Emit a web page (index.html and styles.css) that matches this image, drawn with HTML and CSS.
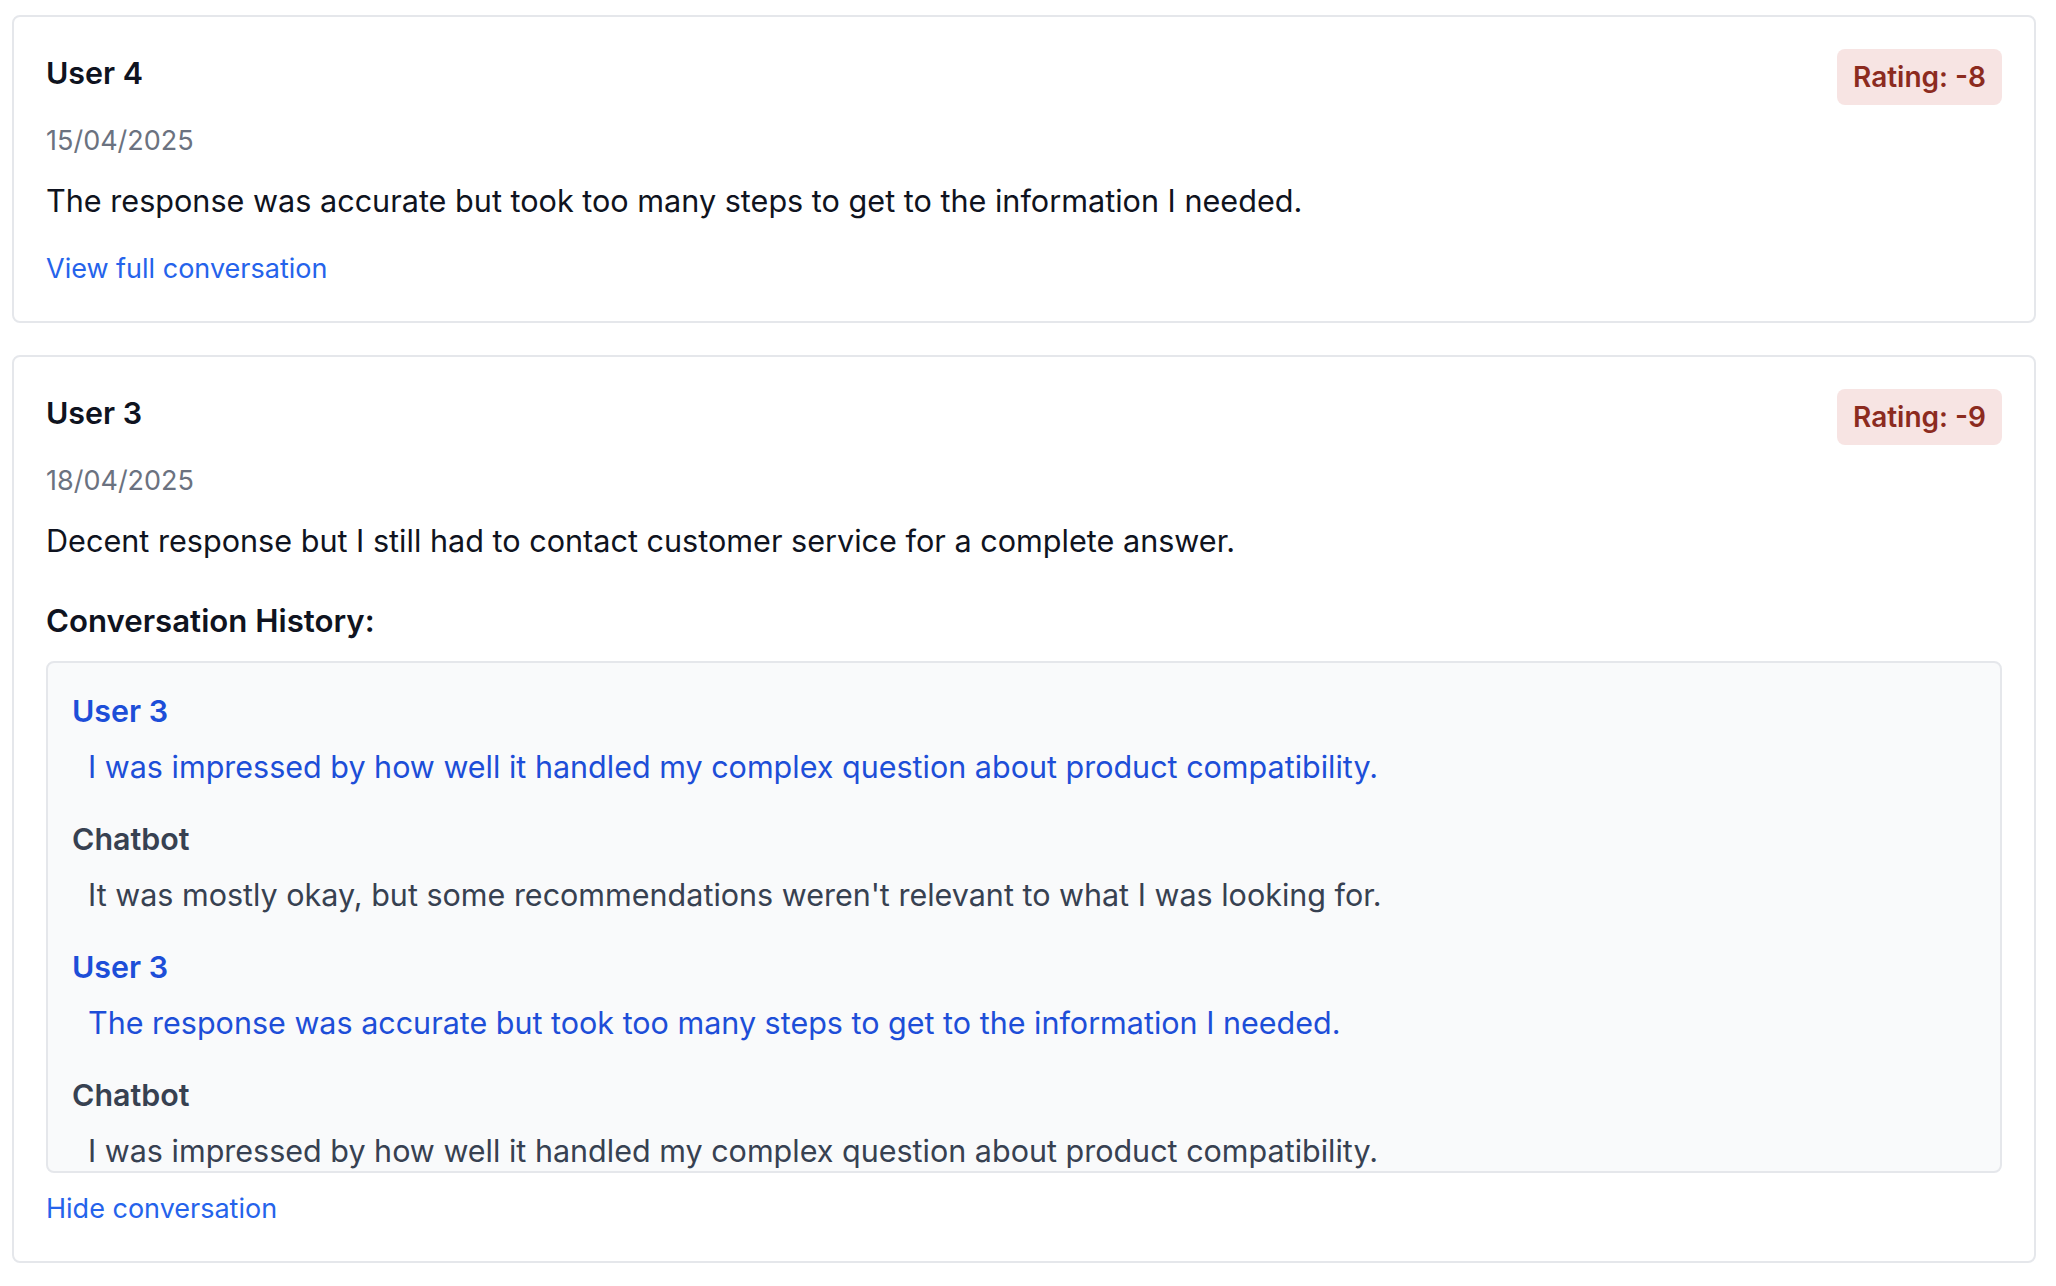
FILE: index.html
```html
<!DOCTYPE html>
<html lang="en">
<head>
<meta charset="utf-8">
<title>Feedback</title>
<link rel="stylesheet" href="styles.css">
</head>
<body>
<main class="list">
  <article class="card">
    <div class="card-head">
      <h3 class="user">User 4</h3>
      <span class="badge">Rating: -8</span>
    </div>
    <p class="date">15/04/2025</p>
    <p class="comment">The response was accurate but took too many steps to get to the information I needed.</p>
    <button class="link">View full conversation</button>
  </article>

  <article class="card">
    <div class="card-head">
      <h3 class="user">User 3</h3>
      <span class="badge">Rating: -9</span>
    </div>
    <p class="date">18/04/2025</p>
    <p class="comment">Decent response but I still had to contact customer service for a complete answer.</p>
    <h4 class="history-title">Conversation History:</h4>
    <div class="history">
      <div class="msg msg-user">
        <div class="who">User 3</div>
        <div class="text">I was impressed by how well it handled my complex question about product compatibility.</div>
      </div>
      <div class="msg msg-bot">
        <div class="who">Chatbot</div>
        <div class="text">It was mostly okay, but some recommendations weren't relevant to what I was looking for.</div>
      </div>
      <div class="msg msg-user">
        <div class="who">User 3</div>
        <div class="text">The response was accurate but took too many steps to get to the information I needed.</div>
      </div>
      <div class="msg msg-bot">
        <div class="who">Chatbot</div>
        <div class="text">I was impressed by how well it handled my complex question about product compatibility.</div>
      </div>
    </div>
    <button class="link">Hide conversation</button>
  </article>
</main>
</body>
</html>
```
FILE: styles.css
```css
* { box-sizing: border-box; }
html, body { margin: 0; padding: 0; background: #ffffff; }
body {
  font-family: "Inter", "Liberation Sans", sans-serif;
  color: #111827;
}
.list {
  display: flex;
  flex-direction: column;
  gap: 32px;
  padding: 15px 20px 0 12px;
}
.card {
  border: 2px solid #e5e7eb;
  border-radius: 8px;
  background: #fff;
  padding: 32px;
}
.card-head {
  display: flex;
  justify-content: space-between;
  align-items: flex-start;
}
.user {
  margin: 0;
  font-size: 30.4px;
  line-height: 48px;
  font-weight: 600;
  color: #0f1320;
}
.badge {
  background: #f7e4e3;
  color: #8c2b1f;
  font-size: 28px;
  line-height: 40px;
  font-weight: 600;
  padding: 8px 16px;
  border-radius: 8px;
}
.date {
  margin: 16px 0 16px;
  font-size: 27px;
  line-height: 40px;
  color: #6b7280;
}
.comment {
  margin: 0;
  font-size: 30.6px;
  line-height: 48px;
  color: #0f1320;
}
.link {
  display: block;
  margin-top: 24px;
  padding: 0;
  border: 0;
  background: none;
  font-family: inherit;
  font-size: 27px;
  line-height: 40px;
  color: #2563eb;
  cursor: pointer;
}
.history-title {
  margin: 32px 0 16px;
  font-size: 31.2px;
  line-height: 48px;
  font-weight: 600;
  color: #0f1320;
}
.history {
  height: 512px;
  overflow: hidden;
  background: #f9fafb;
  border: 2px solid #e5e7eb;
  border-radius: 8px;
  padding: 24px;
}
.history + .link { margin-top: 16px; }
.msg + .msg { margin-top: 24px; }
.who {
  font-size: 30.4px;
  line-height: 48px;
  font-weight: 600;
}
.text {
  margin-top: 8px;
  padding-left: 16px;
  font-size: 30.5px;
  line-height: 48px;
}
.msg-user { color: #1d4ed8; }
.msg-bot { color: #374151; }
```
